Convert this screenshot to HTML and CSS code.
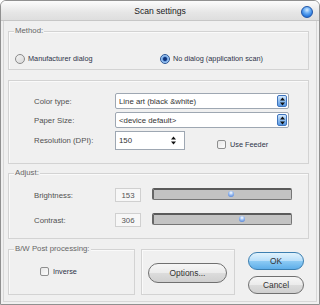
FILE: index.html
```html
<!DOCTYPE html>
<html lang="en">

<head>
    <meta charset="UTF-8">
    <title>Scan settings</title>
    <link rel="stylesheet" href="styles.css">
</head>

<body>
    <div class="window">
        <div class="titlebar">
            <span class="title">Scan settings</span>
            <span class="close"></span>
        </div>
        <div class="frame">
            <div class="group method">
                <span class="legend">Method:</span>
                <label class="radio-item first"><span class="radio"></span>Manufacturer dialog</label>
                <label class="radio-item"><span class="radio on"></span>No dialog (application scan)</label>
            </div>

            <div class="group source">
                <div class="row">
                    <span class="label">Color type:</span>
                    <div class="select">Line art (black &amp;white)
                        <span class="drop">
                            <svg width="5" height="9" viewBox="0 0 5 9"><path d="M2.5 0.5L5 3.5H0z M2.5 8.5L5 5.5H0z" fill="#111"/></svg>
                        </span>
                    </div>
                </div>
                <div class="row">
                    <span class="label">Paper Size:</span>
                    <div class="select">&lt;device default&gt;
                        <span class="drop">
                            <svg width="5" height="9" viewBox="0 0 5 9"><path d="M2.5 0.5L5 3.5H0z M2.5 8.5L5 5.5H0z" fill="#111"/></svg>
                        </span>
                    </div>
                </div>
                <div class="row">
                    <span class="label">Resolution (DPI):</span>
                    <div class="spin">150
                        <svg class="spin-arrows" width="5" height="9" viewBox="0 0 5 9"><path d="M2.5 0.5L5 3.5H0z M2.5 8.5L5 5.5H0z" fill="#111"/></svg>
                    </div>
                    <label class="check-item feeder"><span class="check"></span>Use Feeder</label>
                </div>
            </div>

            <div class="group adjust">
                <span class="legend">Adjust:</span>
                <div class="row">
                    <span class="label">Brightness:</span>
                    <span class="value">153</span>
                    <div class="track"><span class="thumb" style="left: 56%"></span></div>
                </div>
                <div class="row">
                    <span class="label">Contrast:</span>
                    <span class="value">306</span>
                    <div class="track"><span class="thumb" style="left: 64%"></span></div>
                </div>
            </div>

            <div class="bottom">
                <div class="group post">
                    <span class="legend">B/W Post processing:</span>
                    <label class="check-item"><span class="check"></span>Inverse</label>
                </div>
                <div class="group options">
                    <button class="btn wide">Options...</button>
                </div>
                <div class="actions">
                    <button class="btn ok">OK</button>
                    <button class="btn">Cancel</button>
                </div>
            </div>
        </div>
    </div>
</body>

</html>
```

FILE: styles.css
```css
* {
    margin: 0;
    padding: 0;
    box-sizing: border-box;
}

body {
    width: 320px;
    height: 305px;
    background: #fff;
    font-family: "Liberation Sans", Arial, sans-serif;
    font-size: 7.8px;
    color: #4a4a4a;
}

.window {
    width: 320px;
    height: 305px;
    display: flex;
    flex-direction: column;
    border: 1px solid #909090;
    border-radius: 6px 6px 0 0;
    background: #f0f0f0;
}

.titlebar {
    position: relative;
    height: 20px;
    display: flex;
    align-items: center;
    justify-content: center;
    border-bottom: 1px solid #c6c6c6;
    border-radius: 5px 5px 0 0;
    background: linear-gradient(#fcfcfc, #e6e6e6 60%, #dedede);
}

.title {
    font-size: 8.6px;
    color: #202020;
}

.close {
    position: absolute;
    right: 6px;
    top: 5px;
    width: 12px;
    height: 12px;
    border-radius: 50%;
    border: 1px solid #1f55a8;
    background: radial-gradient(circle at 50% 30%, #d6ecff 0, #6fb0f5 35%, #2d7ee0 70%, #1a5fc0 100%);
}

.frame {
    flex: 1;
    margin: 0 2px 2px;
    padding: 10px 7px 0 4px;
    border: 1px solid #d8d8d8;
    border-top: 0;
}

.group {
    position: relative;
    border: 1px solid #d3d3d3;
    box-shadow: inset 1px 1px 0 #fafafa;
}

.legend {
    position: absolute;
    top: -6px;
    left: 5px;
    padding: 0 1px;
    background: #f0f0f0;
    color: #666;
    line-height: 10px;
}

.method {
    height: 39px;
    margin-bottom: 10px;
    padding: 16px 0 0 6px;
    display: flex;
    align-items: center;
    align-content: flex-start;
}

.radio-item {
    display: flex;
    align-items: center;
    gap: 3px;
    font-size: 7.3px;
    color: #2e3348;
    height: 10px;
}

.radio-item.first {
    width: 145px;
}

.radio {
    width: 10px;
    height: 10px;
    border-radius: 50%;
    border: 1px solid #8a8a8a;
    background: linear-gradient(135deg, #f4f4f4, #d8d8d8);
}

.radio.on {
    border-color: #2b5797;
    background: radial-gradient(circle, #0c2a66 0, #173f8a 28%, #7fb2ec 48%, #d8e9fb 100%);
}

.source {
    height: 84px;
    margin-bottom: 9px;
    padding: 12px 0 0 25px;
    display: flex;
    flex-direction: column;
    gap: 3px;
}

.row {
    display: flex;
    align-items: center;
}

.label {
    width: 81px;
    color: #505050;
}

.select {
    position: relative;
    width: 174px;
    height: 16px;
    padding-left: 3px;
    display: flex;
    align-items: center;
    border: 1px solid #9ea7b2;
    border-radius: 2px;
    background: #fff;
    color: #333;
}

.drop {
    position: absolute;
    right: 1px;
    top: 1px;
    width: 10px;
    height: 12px;
    display: flex;
    align-items: center;
    justify-content: center;
    border: 1px solid #3f74bd;
    border-radius: 2px;
    background: linear-gradient(#d4e8fc, #8fbef0 50%, #5b9ae4);
}

.spin {
    position: relative;
    width: 70px;
    height: 19px;
    padding-left: 3px;
    display: flex;
    align-items: center;
    border: 1px solid #9ea7b2;
    background: #fff;
    color: #333;
}

.spin-arrows {
    position: absolute;
    right: 8px;
    top: 4px;
}

.check-item {
    display: flex;
    align-items: center;
    gap: 4px;
    font-size: 7.3px;
    color: #2e3348;
}

.check {
    width: 9px;
    height: 9px;
    border: 1px solid #8e8f8f;
    border-radius: 2px;
    background: linear-gradient(135deg, #e6e6e6, #fdfdfd);
}

.feeder {
    align-self: flex-end;
    margin-left: 32px;
    margin-bottom: 1px;
}

.adjust {
    height: 66px;
    margin-bottom: 10px;
    padding: 14px 0 0 25px;
    display: flex;
    flex-direction: column;
    gap: 11px;
}

.adjust .row {
    align-items: flex-start;
}

.adjust .label {
    margin-top: 3px;
}

.value {
    width: 26px;
    height: 14px;
    display: flex;
    align-items: center;
    justify-content: center;
    border: 1px solid #d0d0d0;
    background: #f7f7f7;
    color: #555;
}

.track {
    position: relative;
    width: 140px;
    height: 12px;
    margin-left: 11px;
    border: 1px solid #767676;
    border-top: 2px solid #5a5a5a;
    border-left: 2px solid #666;
    border-radius: 2px;
    background: #c3c3c3;
}

.thumb {
    position: absolute;
    top: 1px;
    width: 6px;
    height: 6px;
    margin-left: -3px;
    border-radius: 50%;
    background: radial-gradient(circle at 50% 30%, #fff 0, #9ec0f2 40%, #3b6fd0 100%);
}

.bottom {
    display: flex;
    height: 46px;
}

.post {
    width: 127px;
    padding: 17px 0 0 31px;
}

.options {
    width: 94px;
    margin-left: 6px;
    padding: 13px 0 0 6px;
}

.actions {
    width: 56px;
    margin-left: 13px;
    margin-top: 3px;
    display: flex;
    flex-direction: column;
    gap: 6px;
}

.btn {
    height: 18px;
    border: 1px solid #707070;
    border-radius: 9px;
    background: linear-gradient(#f6f6f6, #ebebeb 50%, #dcdcdc 51%, #cfcfcf);
    font-family: "Liberation Sans", Arial, sans-serif;
    font-size: 8.4px;
    color: #333;
}

.btn.wide {
    width: 79px;
    height: 20px;
    border-radius: 10px;
}

.btn.ok {
    border-color: #3c7fb1;
    background: linear-gradient(#e1f2fc, #b7defa 50%, #8ccaf4 51%, #5eaee9);
}
```
